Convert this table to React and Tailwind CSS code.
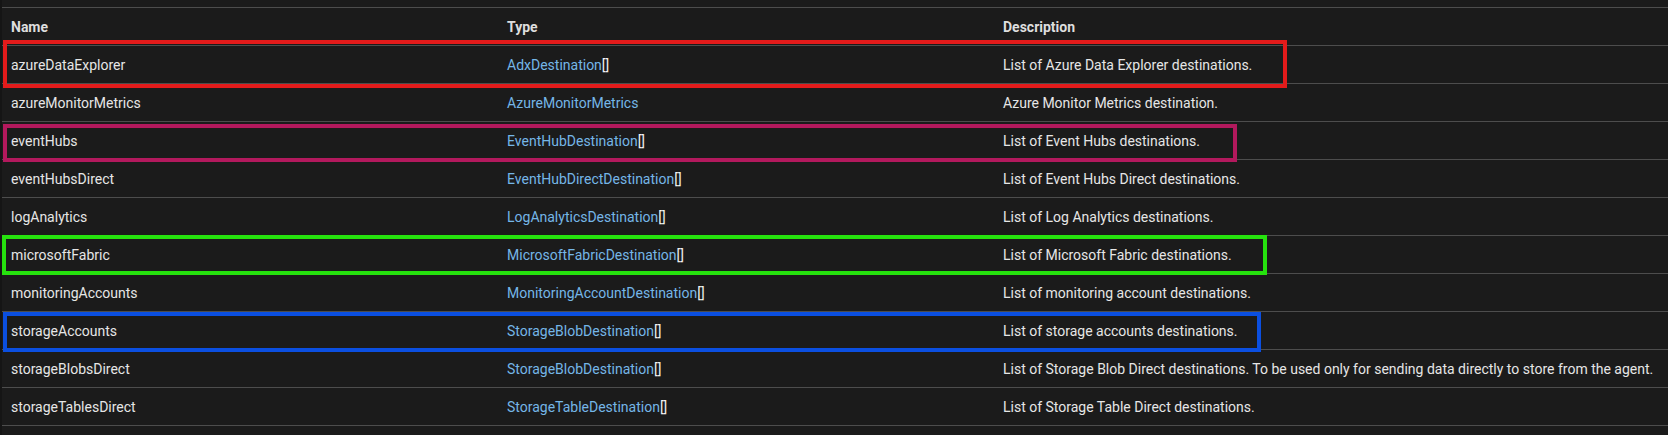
const rows = [
  { name: "azureDataExplorer", type: "AdxDestination", array: true, desc: "List of Azure Data Explorer destinations." },
  { name: "azureMonitorMetrics", type: "AzureMonitorMetrics", array: false, desc: "Azure Monitor Metrics destination." },
  { name: "eventHubs", type: "EventHubDestination", array: true, desc: "List of Event Hubs destinations." },
  { name: "eventHubsDirect", type: "EventHubDirectDestination", array: true, desc: "List of Event Hubs Direct destinations." },
  { name: "logAnalytics", type: "LogAnalyticsDestination", array: true, desc: "List of Log Analytics destinations." },
  { name: "microsoftFabric", type: "MicrosoftFabricDestination", array: true, desc: "List of Microsoft Fabric destinations." },
  { name: "monitoringAccounts", type: "MonitoringAccountDestination", array: true, desc: "List of monitoring account destinations." },
  { name: "storageAccounts", type: "StorageBlobDestination", array: true, desc: "List of storage accounts destinations." },
  {
    name: "storageBlobsDirect",
    type: "StorageBlobDestination",
    array: true,
    desc: "List of Storage Blob Direct destinations. To be used only for sending data directly to store from the agent.",
  },
  { name: "storageTablesDirect", type: "StorageTableDestination", array: true, desc: "List of Storage Table Direct destinations." },
];

const App = () => {
  return (
    <div
      className="relative w-[1668px] h-[435px] overflow-hidden bg-[#151515] text-sm text-[#e6e6e6]"
      style={{ fontFamily: "Roboto, 'Liberation Sans', sans-serif" }}
    >
      <div className="ml-[2px] h-full bg-[#1b1b1b]">
        <div className="h-[7px]" />
        <div className="grid grid-cols-[497px_496px_1fr] h-[39px] items-center border-y border-[#4d4d4d] font-bold text-[#dedede]">
          <div className="pl-[9px]">Name</div>
          <div className="pl-2">Type</div>
          <div className="pl-2">Description</div>
        </div>
        {rows.map((row) => (
          <div
            key={row.name}
            className="grid grid-cols-[497px_496px_1fr] h-[38px] items-center border-b border-[#4d4d4d]"
          >
            <div className="pl-[9px]">{row.name}</div>
            <div className="pl-2">
              <span className="text-[#75b6e7]">{row.type}</span>
              {row.array && <span className="text-[#f0f0f0]">[]</span>}
            </div>
            <div className="pl-2 whitespace-nowrap">{row.desc}</div>
          </div>
        ))}
      </div>

      {/* annotation boxes */}
      <div className="absolute left-[3px] top-[40px] w-[1284px] h-[48px] border-4 border-[#e31b1b]" />
      <div className="absolute left-[3px] top-[124px] w-[1234px] h-[38px] border-4 border-[#b3195d]" />
      <div className="absolute left-[2px] top-[235px] w-[1265px] h-[40px] border-4 border-[#26e20e]" />
      <div className="absolute left-[3px] top-[312px] w-[1258px] h-[40px] border-4 border-[#0b4fe0]" />
    </div>
  );
};

export default App;
